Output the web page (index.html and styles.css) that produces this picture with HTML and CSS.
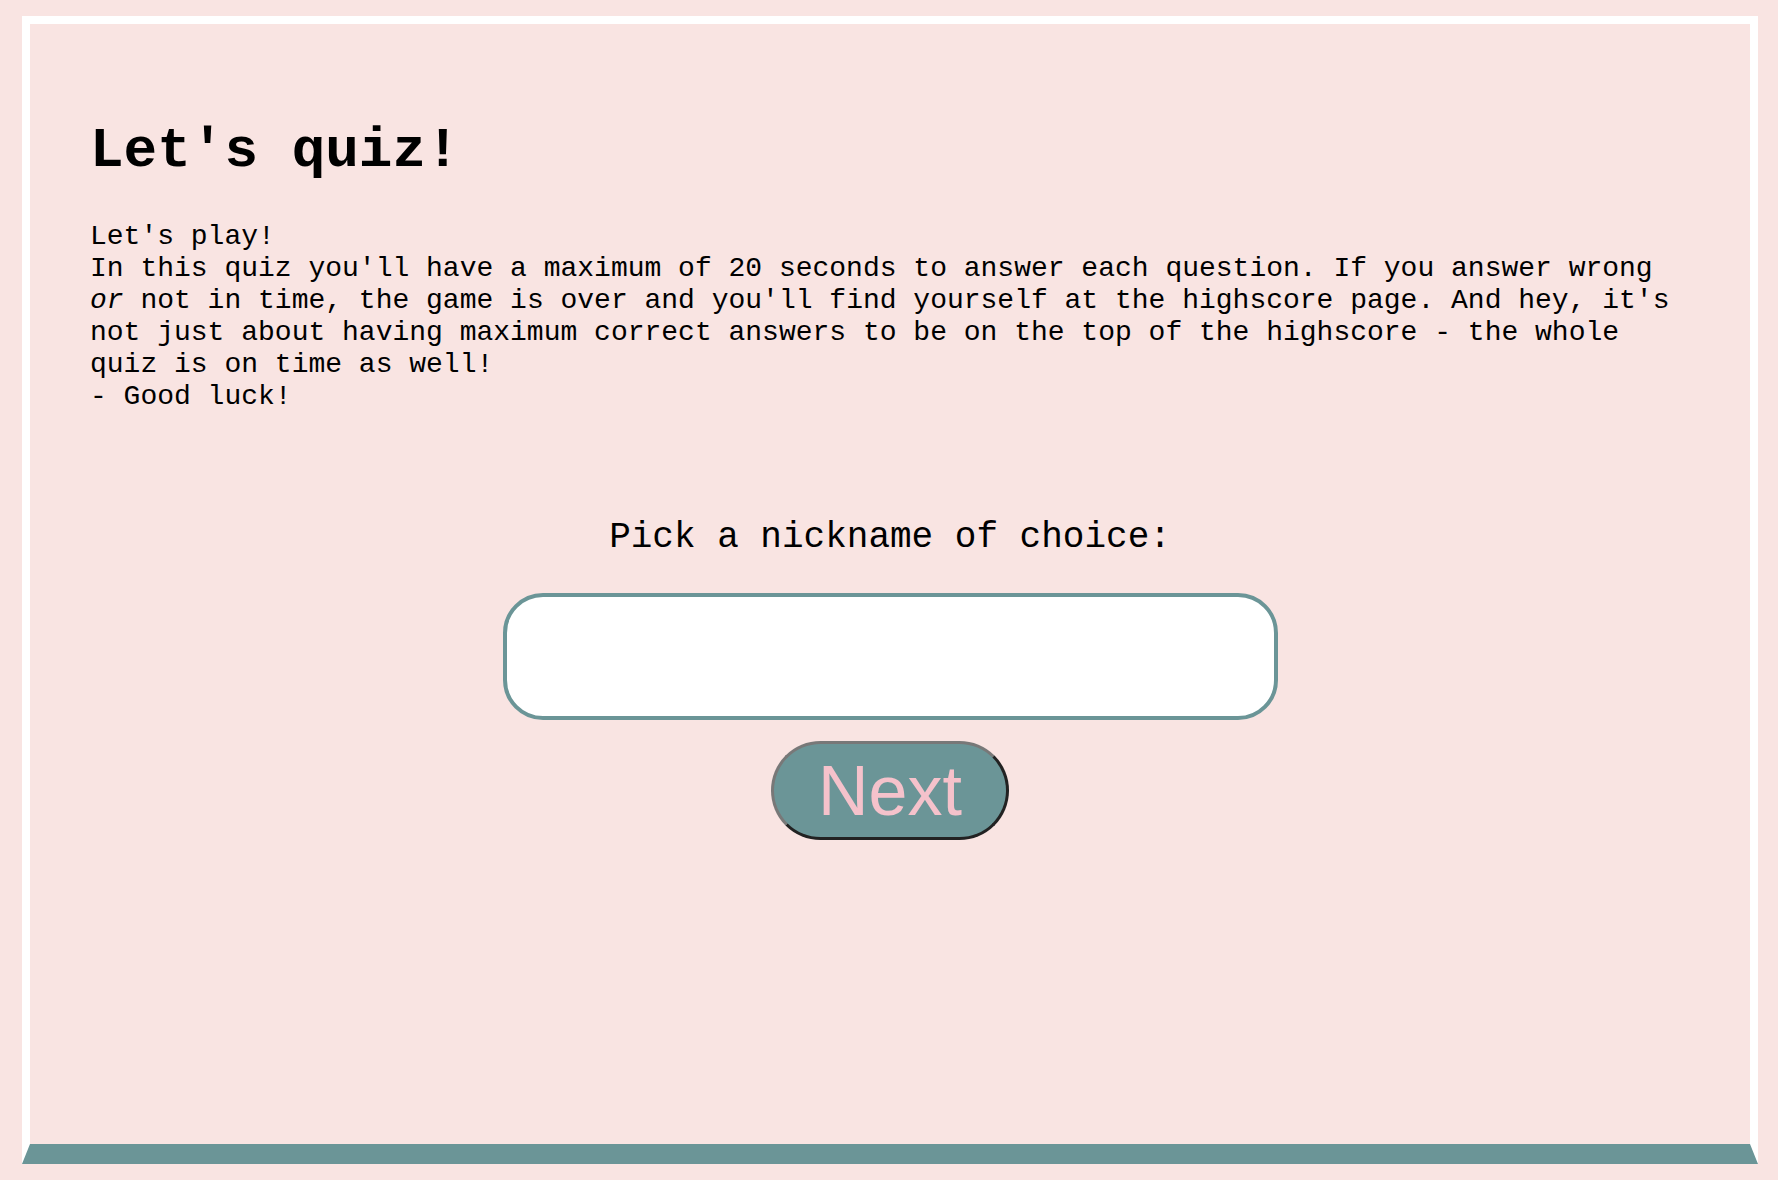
FILE: index.html
```html
<!DOCTYPE html>
<html lang="en">
<head>
<meta charset="utf-8">
<title>Let's quiz!</title>
<link rel="stylesheet" href="styles.css">
</head>
<body>
<main class="frame">
  <section class="intro">
    <h1 class="title">Let's quiz!</h1>
    <p class="rules">Let's play!<br>In this quiz you'll have a maximum of 20 seconds to answer each question. If you answer wrong <em>or</em> not in time, the game is over and you'll find yourself at the highscore page. And hey, it's not just about having maximum correct answers to be on the top of the highscore - the whole quiz is on time as well!<br>- Good luck!</p>
  </section>
  <form class="nick">
    <label class="nick-label" for="nick">Pick a nickname of choice:</label>
    <input class="nick-input" id="nick" type="text">
    <button class="next-btn" type="button">Next</button>
  </form>
</main>
</body>
</html>
```
FILE: styles.css
```css
html, body {
  margin: 0;
  padding: 0;
  background: #f9e4e2;
}

body {
  padding: 16px 20px 16px 22px;
  font-family: "Liberation Mono", "Courier New", monospace;
  color: #000;
}

.frame {
  box-sizing: border-box;
  height: calc(100vh - 32px);
  border-style: solid;
  border-width: 8px 8px 20px 8px;
  border-color: #fff #fff #6b9597 #fff;
  padding: 95px 60px 0 60px;
}

.title {
  margin: 0;
  font-size: 56px;
  font-weight: bold;
  line-height: normal;
}

.rules {
  margin: 38px 0 0;
  font-size: 28px;
  line-height: 32px;
}

.nick {
  margin-top: 104px;
  display: flex;
  flex-direction: column;
  align-items: center;
}

.nick-label {
  font-size: 36px;
  line-height: normal;
}

.nick-input {
  box-sizing: border-box;
  margin: 35px 0 0;
  width: 775px;
  height: 127px;
  border: 4px solid #6b9597;
  border-radius: 40px;
  background: #fff;
  outline: none;
  padding: 0 30px;
  font-family: "Liberation Mono", monospace;
  font-size: 36px;
}

.next-btn {
  box-sizing: border-box;
  margin-top: 21px;
  height: 99px;
  padding: 0 44px;
  border-style: solid;
  border-width: 3px;
  border-color: #787878 #222 #222 #787878;
  border-radius: 50px;
  background: #6b9597;
  color: #f5c2cb;
  font-family: "Liberation Sans", Arial, sans-serif;
  font-size: 70px;
  line-height: normal;
  cursor: pointer;
}
```
